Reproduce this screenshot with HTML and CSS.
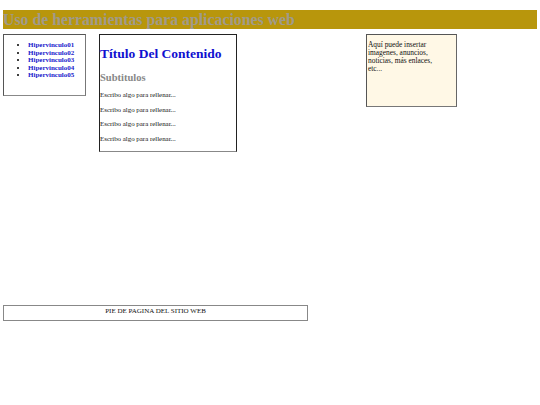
FILE: index.html
```html
<!DOCTYPE html>
<html lang="es">
<head>
<meta charset="utf-8">
<title>Uso de herramientas para aplicaciones web</title>
<link rel="stylesheet" href="styles.css">
</head>
<body>
<header class="cabecera"><h1>Uso de herramientas para aplicaciones web</h1></header>
<div class="cuerpo">
  <nav class="menu">
    <ul>
      <li><a href="#">Hipervinculo01</a></li>
      <li><a href="#">Hipervinculo02</a></li>
      <li><a href="#">Hipervinculo03</a></li>
      <li><a href="#">Hipervinculo04</a></li>
      <li><a href="#">Hipervinculo05</a></li>
    </ul>
  </nav>
  <main class="contenido">
    <h2 class="titulo">Título Del Contenido</h2>
    <h3 class="subtitulo">Subtitulos</h3>
    <p>Escribo algo para rellenar...</p>
    <p>Escribo algo para rellenar...</p>
    <p>Escribo algo para rellenar...</p>
    <p>Escribo algo para rellenar...</p>
  </main>
  <aside class="lateral">
    <p>Aquí puede insertar imagenes, anuncios, noticias, más enlaces, etc...</p>
  </aside>
</div>
<footer class="pie">PIE DE PAGINA DEL SITIO WEB</footer>
</body>
</html>
```
FILE: styles.css
```css
html, body {
  margin: 0;
  padding: 0;
  background: #fff;
  font-family: "Liberation Serif", "Times New Roman", serif;
}
body {
  padding: 10px 3px 0 3px;
  width: 534px;
}
.cabecera {
  background: #b8960c;
  height: 19px;
}
.cabecera h1 {
  margin: 0;
  font-size: 15.8px;
  line-height: 19px;
  color: #a09a8a;
  font-weight: bold;
  white-space: nowrap;
}
.cuerpo {
  display: flex;
  align-items: flex-start;
  margin-top: 5px;
  height: 271px;
}
.menu {
  box-sizing: border-box;
  width: 83px;
  height: 62px;
  border: 1px solid #555;
  border-right-color: #777;
  border-bottom-color: #888;
}
.menu ul {
  margin: 7px 0 0 0;
  padding: 0 0 0 24px;
  font-size: 7px;
  line-height: 7.6px;
}
.menu li a {
  color: #1a1acc;
  font-weight: bold;
  text-decoration: none;
}
.contenido {
  box-sizing: border-box;
  margin-left: 13px;
  width: 138px;
  height: 118px;
  border: 1px solid #222;
  border-bottom-color: #888;
  padding: 0 0 0 0;
}
.titulo {
  margin: 10px 0 0 0;
  font-size: 13.5px;
  line-height: 17px;
  color: #1010d0;
}
.subtitulo {
  margin: 10px 0 0 0;
  font-size: 10.5px;
  line-height: 12px;
  color: #888;
}
.contenido p {
  margin: 6px 0 0 0;
  font-size: 6.9px;
  line-height: 8.5px;
  color: #111;
}
.contenido .subtitulo + p {
  margin-top: 7px;
}
.lateral {
  box-sizing: border-box;
  margin-left: 129px;
  width: 91px;
  height: 73px;
  background: #fff8e6;
  border: 1px solid #555;
  border-right-color: #666;
  border-bottom-color: #777;
  padding: 6px 0 0 1px;
}
.lateral p {
  margin: 0;
  width: 70px;
  font-size: 7.4px;
  line-height: 8px;
  color: #111;
}
.pie {
  box-sizing: border-box;
  width: 305px;
  height: 16px;
  border: 1px solid #888;
  font-size: 7px;
  line-height: 10px;
  text-align: center;
  color: #111;
}
```
